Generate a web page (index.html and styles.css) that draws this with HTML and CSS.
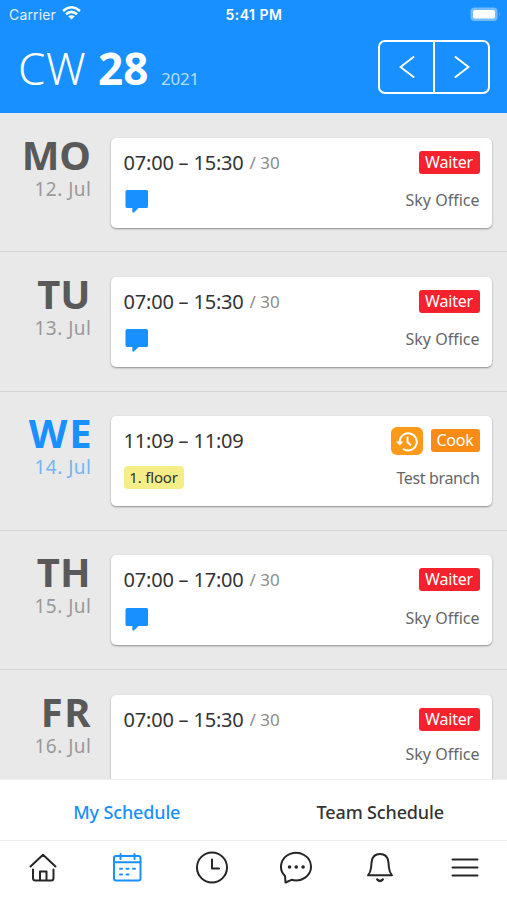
FILE: index.html
```
<!DOCTYPE html>
<html lang="en">
<head>
<meta charset="utf-8">
<title>My Schedule</title>
<link rel="stylesheet" href="styles.css">
</head>
<body>
<svg class="defs" width="0" height="0">
    <symbol id="note" viewBox="0 0 24 24">
        <path d="M2.500 0H21.500Q23 0 23 1.500V16.500Q23 18 21.500 18H13.500L9.500 22Q7.500 23.500 7.300 21.500V18H2.500Q.5 18 .5 16.500V1.500Q.5 0 2.500 0Z" fill="#1890ff"/>
    </symbol>
</svg>

<header class="header">
    <div class="status">
        <div class="carrier">
            <span>Carrier</span>
            <svg width="19" height="14" viewBox="0 0 19 14" fill="none" stroke="#fff" stroke-width="2.500">
                <path d="M1 5Q9.500 -2.500 18 5"/>
                <path d="M4 8.300Q9.500 3.500 15 8.300"/>
                <path d="M6.300 10.300Q9.500 8 12.700 10.300L9.500 13.500Z" fill="#fff" stroke="none"/>
            </svg>
        </div>
        <span class="clock">5:41 PM</span>
        <svg class="battery" width="31" height="15" viewBox="0 0 31 15">
            <rect x=".5" y=".5" width="27" height="13.500" rx="4" fill="#74bcff"/>
            <rect x="3" y="3" width="22" height="8.500" rx="2" fill="#fff"/>
            <path d="M29 5Q30.500 7 29 9Z" fill="#74bcff"/>
        </svg>
    </div>
    <div class="week">
        <div class="title"><span class="cw">CW</span><b class="num">28</b><span class="year">2021</span></div>
        <div class="switch">
            <a class="prev"><svg width="16" height="22" viewBox="0 0 16 22"><path d="M14.500 1L1.500 11L14.500 21"/></svg></a>
            <a class="next"><svg width="16" height="22" viewBox="0 0 16 22"><path d="M1.500 1L14.500 11L1.500 21"/></svg></a>
        </div>
    </div>
</header>

<main class="days">
    <section class="day">
        <div class="date"><div class="name mo">MO</div><div class="sub">12. Jul</div></div>
        <div class="card">
            <div class="line"><span class="time">07:00 – 15:30</span><span class="pause">/ 30</span><span class="tag red">Waiter</span></div>
            <div class="line second"><svg class="note" width="24" height="24"><use href="#note"/></svg><span class="place">Sky Office</span></div>
        </div>
    </section>
    <section class="day">
        <div class="date"><div class="name">TU</div><div class="sub">13. Jul</div></div>
        <div class="card">
            <div class="line"><span class="time">07:00 – 15:30</span><span class="pause">/ 30</span><span class="tag red">Waiter</span></div>
            <div class="line second"><svg class="note" width="24" height="24"><use href="#note"/></svg><span class="place">Sky Office</span></div>
        </div>
    </section>
    <section class="day today">
        <div class="date"><div class="name we">WE</div><div class="sub">14. Jul</div></div>
        <div class="card">
            <div class="line">
                <span class="time">11:09 – 11:09</span>
                <svg class="history" width="32" height="28" viewBox="0 0 32 28">
                    <rect width="32" height="28" rx="6" fill="#ff9a1a"/>
                    <g fill="none" stroke="#fff" stroke-width="1.900">
                        <path d="M8.600 16V14.800A8.600 8.600 0 1 1 12 21.700"/>
                        <path d="M16.500 9.500V15L20 18.500"/>
                    </g>
                    <path d="M5 14.500H12.400L8.700 18.600Z" fill="#fff"/>
                </svg>
                <span class="tag orange">Cook</span>
            </div>
            <div class="line second early"><span class="floor">1. floor</span><span class="place branch">Test branch</span></div>
        </div>
    </section>
    <section class="day">
        <div class="date"><div class="name">TH</div><div class="sub">15. Jul</div></div>
        <div class="card">
            <div class="line"><span class="time">07:00 – 17:00</span><span class="pause">/ 30</span><span class="tag red">Waiter</span></div>
            <div class="line second"><svg class="note" width="24" height="24"><use href="#note"/></svg><span class="place">Sky Office</span></div>
        </div>
    </section>
    <section class="day">
        <div class="date"><div class="name fr">FR</div><div class="sub">16. Jul</div></div>
        <div class="card">
            <div class="line"><span class="time">07:00 – 15:30</span><span class="pause">/ 30</span><span class="tag red">Waiter</span></div>
            <div class="line second last"><span class="place">Sky Office</span></div>
        </div>
    </section>
</main>

<div class="tabs">
    <a class="tab active">My Schedule</a>
    <a class="tab">Team Schedule</a>
</div>

<nav class="nav">
    <a><svg width="34" height="34" viewBox="0 0 34 34"><path d="M4.500 15.500L17 3.700L29.500 15.500M7 18.500V27Q7 29.500 9.500 29.500H25Q27.500 29.500 27.500 27V18.500M14 29V20.500H20.500V29"/></svg></a>
    <a class="active"><svg width="34" height="34" viewBox="0 0 34 34"><rect x="4" y="5" width="26.500" height="24.500" rx="2"/><path d="M4 11.300H30.500M10.500 3V8M24.500 3V8M10 17.700H12M16.500 17.700H18.500M23 17.700H25M10 23.500H12M16.500 23.500H18.500"/></svg></a>
    <a><svg width="34" height="34" viewBox="0 0 34 34"><circle cx="17" cy="16.500" r="15"/><path d="M17 8.500V17.500H24"/></svg></a>
    <a><svg width="34" height="34" viewBox="0 0 34 34"><path d="M6 25A15 13.800 0 1 1 12.500 28.800L6.500 31.500Z"/><path class="dots" d="M10.500 16H10.600M17.200 16H17.300M24 16H24.100"/></svg></a>
    <a><svg width="34" height="34" viewBox="0 0 34 34"><path d="M5 24.300H29Q26.500 21.500 26 17L25.300 10.500Q24.300 3 17 3T8.700 10.500L8 17Q7.500 21.500 5 24.300Z"/><path class="clapper" d="M14.300 28.500Q17 31.500 19.700 28.500"/></svg></a>
    <a><svg width="34" height="34" viewBox="0 0 34 34"><path d="M4.500 8.500H29.500M4.500 16.500H29.500M4.500 24.500H29.500"/></svg></a>
</nav>
</body>
</html>
```
FILE: styles.css
```
* {
    box-sizing: border-box;
}

body {
    margin: 0;
    height: 900px;
    display: flex;
    flex-direction: column;
    overflow: hidden;
    background: #fff;
    color: #333;
    font-family: "Noto Sans", "Open Sans", sans-serif;
}

.defs {
    display: none;
}

.header {
    height: 113px;
    flex: none;
    background: #1890ff;
    color: #fff;
}

.status {
    height: 28px;
    display: grid;
    grid-template-columns: 1fr auto 1fr;
    align-items: center;
    padding: 0 6px 0 9px;
    font-family: Inter, sans-serif;
    font-size: 14px;
}

.carrier {
    display: flex;
    align-items: center;
    gap: 6px;
    color: #e3f2ff;
    letter-spacing: 0.15px;
}

.carrier svg {
    margin-bottom: 2px;
}

.clock {
    font-weight: 600;
    letter-spacing: 0.5px;
    margin-right: 2px;
}

.battery {
    justify-self: end;
}

.week {
    height: 77px;
    display: flex;
    justify-content: space-between;
    align-items: center;
    padding: 0 17px 0 18px;
}

.title {
    display: flex;
    align-items: baseline;
    line-height: 50px;
    padding-top: 13px;
}

.cw {
    font-size: 44px;
    font-weight: 300;
    width: 80px;
    letter-spacing: 0.5px;
}

.num {
    font-size: 44px;
    width: 63px;
}

.year {
    font-size: 17px;
    color: #b5dcff;
    letter-spacing: -0.2px;
}

.switch {
    display: flex;
    width: 112px;
    height: 54px;
    margin-top: 1px;
    border: 2px solid #fff;
    border-radius: 7px;
}

.switch a {
    flex: 1;
    display: flex;
    align-items: center;
    justify-content: center;
}

.switch svg {
    fill: none;
    stroke: #fff;
    stroke-width: 2;
    stroke-linecap: round;
}

.prev {
    border-right: 2px solid #fff;
}

.days {
    height: 666px;
    flex: none;
    overflow: hidden;
    background: #e9e9e9;
}

.day {
    height: 139.3px;
    display: flex;
    padding: 24.500px 15px 0 0;
    border-bottom: 1px solid #d5d5d5;
}

.date {
    width: 110.500px;
    padding-right: 19px;
    text-align: right;
    color: #999;
}

.name {
    font-size: 40px;
    font-weight: bold;
    line-height: 34px;
    padding-right: 1px;
    color: #595959;
}

.mo {
    letter-spacing: -0.3px;
}

.we {
    letter-spacing: 1.800px;
    padding-right: 0;
    margin-right: -2px;
}

.fr {
    letter-spacing: 1.500px;
    margin-right: -1.500px;
}

.sub {
    font-size: 19px;
    line-height: 26px;
    padding-top: 4px;
    letter-spacing: 0.5px;
}

.today .date {
    color: #74b3f0;
}

.today .name {
    color: #1890ff;
}

.card {
    flex: 1;
    height: 90px;
    padding: 10.500px 12.500px 0 13px;
    background: #fff;
    border-radius: 5px;
    box-shadow: 0 1px 2px rgba(0, 0, 0, 0.4);
}

.line {
    height: 28px;
    display: flex;
    align-items: center;
}

.time {
    font-size: 20px;
    letter-spacing: -0.2px;
    width: 126px;
    white-space: nowrap;
}

.pause {
    font-size: 17px;
    color: #8c8c8c;
}

.tag {
    height: 23px;
    line-height: 22px;
    width: 61px;
    margin-left: auto;
    border-radius: 3px;
    color: #fff;
    font-size: 16px;
    letter-spacing: -0.2px;
    text-align: center;
}

.red {
    background: #f5222d;
}

.orange {
    background: #fa8c16;
    width: 49px;
    margin-left: 8px;
}

.history {
    margin-left: auto;
}

.second {
    margin-top: 10px;
}

.early {
    margin-top: 9px;
}

.last {
    margin-top: 7px;
}

.note {
    margin: 4px 0 0 1px;
}

.place {
    margin-left: auto;
    font-size: 16px;
    color: #666;
}

.branch {
    letter-spacing: -0.35px;
}

.floor {
    width: 60px;
    height: 23px;
    line-height: 22px;
    background: #f5ee88;
    border-radius: 4px;
    font-size: 15px;
    letter-spacing: -0.2px;
    text-align: center;
}

.tabs {
    height: 62px;
    flex: none;
    display: flex;
    border-top: 1px solid #eee;
    border-bottom: 1px solid #eee;
}

.tab {
    flex: 1;
    text-align: center;
    font-size: 18px;
    font-weight: 500;
    letter-spacing: -0.15px;
    line-height: 64px;
}

.tabs .active {
    color: #1890ff;
}

.nav {
    flex: 1;
    display: flex;
    padding: 10px 0 0 1px;
}

.nav a {
    flex: 1;
    text-align: center;
}

.nav svg {
    fill: none;
    stroke: #262626;
    stroke-width: 2;
    stroke-linecap: round;
    stroke-linejoin: round;
}

.nav .active svg {
    stroke: #1890ff;
}

.nav .dots {
    stroke-width: 3.500;
}

.nav .clapper {
    stroke-width: 2.500;
}
```
